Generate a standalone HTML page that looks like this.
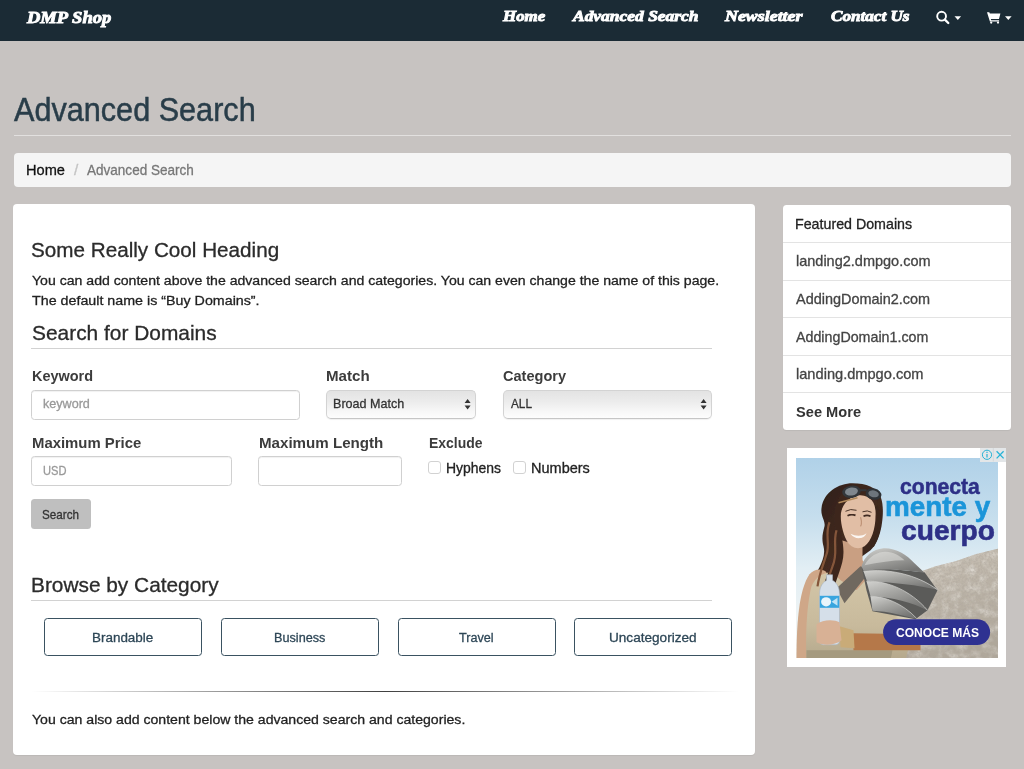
<!DOCTYPE html>
<html lang="en">
<head>
<meta charset="utf-8">
<title>Advanced Search - DMP Shop</title>
<style>
*{box-sizing:border-box;}
html,body{margin:0;padding:0;}
body{width:1024px;height:769px;overflow:hidden;background:#c7c3c1;font-family:"Liberation Sans","DejaVu Sans",sans-serif;color:#222;position:relative;}
.t{position:absolute;display:block;white-space:nowrap;transform-origin:0 0;z-index:5;}
.bx{position:absolute;}
#nav{left:0;top:0;width:1024px;height:40.7px;background:#1b2b35;}
#hr1{left:14px;top:135px;width:997.3px;height:1px;background:#e2e0df;}
#bc{left:13.5px;top:153.2px;width:997.8px;height:33.5px;background:#f5f5f5;border-radius:4px;}
#main{left:13.4px;top:204.1px;width:742px;height:550.9px;background:#fff;border-radius:4px;box-shadow:0 1px 1px rgba(0,0,0,.06);}
.line{left:31px;width:681px;height:1px;background:#d2d2d2;}
.inp{height:29.5px;border:1px solid #d0d0d0;border-radius:3.5px;background:#fff;box-shadow:inset 0 1px 1px rgba(0,0,0,.06);}
.sel{height:29px;border:1px solid #d3d3d3;border-bottom-color:#c6c6c6;border-radius:5px;background:linear-gradient(#e3e3e3 0%,#ececec 40%,#f7f7f7 75%,#fdfdfd 100%);box-shadow:0 1px 1px rgba(0,0,0,.06);}
.cb{width:12.5px;height:12.5px;border:1px solid #d2d2d2;border-radius:3px;background:#fff;}
#btn{left:31px;top:499.25px;width:59.5px;height:29.5px;background:#bfbfbf;border-radius:3.5px;}
.cat{top:618px;width:158px;height:37.7px;border:1px solid #3a5261;border-radius:3.5px;background:#fff;}
#hr2{left:31px;top:691px;width:708px;height:1px;background:linear-gradient(90deg,rgba(0,0,0,0),rgba(0,0,0,.75) 50%,rgba(0,0,0,0));}
#side{left:782.5px;top:204.7px;width:228.5px;height:225.6px;background:#fff;border-radius:3.5px;box-shadow:0 1px 1px rgba(0,0,0,.06);}
.dv{left:782.5px;width:228.5px;height:1px;background:#e3e3e3;}
#ad{left:787px;top:448.2px;width:219px;height:219.2px;background:#fff;}
#brand{left:27.35px;top:5.60px;font:italic bold 16.9px/24px "Liberation Serif","DejaVu Serif",serif;color:#fff;transform:scaleX(1.0963);-webkit-text-stroke:0.9px #fff;}
#n1{left:503.09px;top:5.30px;font:italic bold 15.5px/22px "Liberation Serif","DejaVu Serif",serif;color:#fff;transform:scaleX(1.0912);-webkit-text-stroke:0.9px #fff;}
#n2{left:573.13px;top:5.30px;font:italic bold 15.5px/22px "Liberation Serif","DejaVu Serif",serif;color:#fff;transform:scaleX(1.1262);-webkit-text-stroke:0.9px #fff;}
#n3{left:725.15px;top:5.30px;font:italic bold 15.5px/22px "Liberation Serif","DejaVu Serif",serif;color:#fff;transform:scaleX(1.1538);-webkit-text-stroke:0.9px #fff;}
#n4{left:831.00px;top:5.30px;font:italic bold 15.5px/22px "Liberation Serif","DejaVu Serif",serif;color:#fff;transform:scaleX(1.1053);-webkit-text-stroke:0.9px #fff;}
#h1{left:14.30px;top:86.50px;font:normal normal 33.2px/46px "Liberation Sans","DejaVu Sans",sans-serif;color:#293d49;transform:scaleX(0.9224);-webkit-text-stroke-width:0.5px;}
#b1{left:26.20px;top:160.30px;font:normal normal 14.6px/20px "Liberation Sans","DejaVu Sans",sans-serif;color:#111;transform:scaleX(0.9997);-webkit-text-stroke-width:0.3px;}
#b2{left:73.50px;top:160.30px;font:normal normal 14.6px/20px "Liberation Sans","DejaVu Sans",sans-serif;color:#c4c4c4;transform:scaleX(1.0500);-webkit-text-stroke-width:0.3px;}
#b3{left:86.50px;top:160.30px;font:normal normal 14.6px/20px "Liberation Sans","DejaVu Sans",sans-serif;color:#777;transform:scaleX(0.9271);-webkit-text-stroke-width:0.3px;}
#h2a{left:31.30px;top:236.00px;font:normal normal 20px/28px "Liberation Sans","DejaVu Sans",sans-serif;color:#2b2b2b;transform:scaleX(1.0335);-webkit-text-stroke-width:0.3px;}
#p1{left:31.50px;top:271.00px;font:normal normal 13.7px/19px "Liberation Sans","DejaVu Sans",sans-serif;color:#222;transform:scaleX(1.0291);-webkit-text-stroke-width:0.3px;}
#p2{left:31.50px;top:290.50px;font:normal normal 13.7px/19px "Liberation Sans","DejaVu Sans",sans-serif;color:#222;transform:scaleX(1.0424);-webkit-text-stroke-width:0.3px;}
#h2b{left:31.50px;top:318.50px;font:normal normal 20.3px/28px "Liberation Sans","DejaVu Sans",sans-serif;color:#2b2b2b;transform:scaleX(1.0302);-webkit-text-stroke-width:0.3px;}
#l1{left:31.50px;top:366.00px;font:normal bold 14px/20px "Liberation Sans","DejaVu Sans",sans-serif;color:#3c3c3c;transform:scaleX(1.0329);}
#l2{left:326.25px;top:366.00px;font:normal bold 14px/20px "Liberation Sans","DejaVu Sans",sans-serif;color:#3c3c3c;transform:scaleX(1.0778);}
#l3{left:503.00px;top:366.00px;font:normal bold 14px/20px "Liberation Sans","DejaVu Sans",sans-serif;color:#3c3c3c;transform:scaleX(1.0386);}
#ph1{left:42.75px;top:394.50px;font:normal normal 12.8px/18px "Liberation Sans","DejaVu Sans",sans-serif;color:#999;transform:scaleX(0.9835);-webkit-text-stroke-width:0.3px;}
#s1{left:332.78px;top:395.25px;font:normal normal 13px/18px "Liberation Sans","DejaVu Sans",sans-serif;color:#333;transform:scaleX(0.9659);-webkit-text-stroke-width:0.3px;}
#s2{left:510.50px;top:395.25px;font:normal normal 13px/18px "Liberation Sans","DejaVu Sans",sans-serif;color:#333;transform:scaleX(0.9061);-webkit-text-stroke-width:0.3px;}
#l4{left:31.50px;top:432.50px;font:normal bold 14px/20px "Liberation Sans","DejaVu Sans",sans-serif;color:#3c3c3c;transform:scaleX(1.0639);}
#l5{left:258.75px;top:432.50px;font:normal bold 14px/20px "Liberation Sans","DejaVu Sans",sans-serif;color:#3c3c3c;transform:scaleX(1.0802);}
#l6{left:428.75px;top:432.50px;font:normal bold 14px/20px "Liberation Sans","DejaVu Sans",sans-serif;color:#3c3c3c;transform:scaleX(0.9972);}
#ph2{left:42.75px;top:461.50px;font:normal normal 12.8px/18px "Liberation Sans","DejaVu Sans",sans-serif;color:#999;transform:scaleX(0.8683);-webkit-text-stroke-width:0.3px;}
#c1{left:445.77px;top:458.00px;font:normal normal 14.2px/20px "Liberation Sans","DejaVu Sans",sans-serif;color:#222;transform:scaleX(0.9836);-webkit-text-stroke-width:0.3px;}
#c2{left:530.73px;top:458.00px;font:normal normal 14.2px/20px "Liberation Sans","DejaVu Sans",sans-serif;color:#222;transform:scaleX(1.0229);-webkit-text-stroke-width:0.3px;}
#bt{left:42.25px;top:505.50px;font:normal normal 13px/18px "Liberation Sans","DejaVu Sans",sans-serif;color:#333;transform:scaleX(0.8972);-webkit-text-stroke-width:0.3px;}
#h2c{left:30.97px;top:570.75px;font:normal normal 20.3px/28px "Liberation Sans","DejaVu Sans",sans-serif;color:#2b2b2b;transform:scaleX(1.0276);-webkit-text-stroke-width:0.3px;}
#k1{left:92.22px;top:628.30px;font:normal normal 13.7px/19px "Liberation Sans","DejaVu Sans",sans-serif;color:#2d4656;transform:scaleX(0.9821);-webkit-text-stroke-width:0.3px;}
#k2{left:273.67px;top:628.30px;font:normal normal 13.7px/19px "Liberation Sans","DejaVu Sans",sans-serif;color:#2d4656;transform:scaleX(0.9251);-webkit-text-stroke-width:0.3px;}
#k3{left:459.40px;top:628.30px;font:normal normal 13.7px/19px "Liberation Sans","DejaVu Sans",sans-serif;color:#2d4656;transform:scaleX(0.9232);-webkit-text-stroke-width:0.3px;}
#k4{left:609.41px;top:628.30px;font:normal normal 13.7px/19px "Liberation Sans","DejaVu Sans",sans-serif;color:#2d4656;transform:scaleX(0.9925);-webkit-text-stroke-width:0.3px;}
#p3{left:31.50px;top:710.00px;font:normal normal 13.7px/19px "Liberation Sans","DejaVu Sans",sans-serif;color:#222;transform:scaleX(1.0291);-webkit-text-stroke-width:0.3px;}
#f0{left:795.00px;top:213.50px;font:normal normal 14.2px/20px "Liberation Sans","DejaVu Sans",sans-serif;color:#222;transform:scaleX(1.0033);-webkit-text-stroke-width:0.3px;}
#f1{left:796.30px;top:251.20px;font:normal normal 14.2px/20px "Liberation Sans","DejaVu Sans",sans-serif;color:#444;transform:scaleX(1.0214);-webkit-text-stroke-width:0.3px;}
#f2{left:796.00px;top:288.90px;font:normal normal 14.2px/20px "Liberation Sans","DejaVu Sans",sans-serif;color:#444;transform:scaleX(1.0185);-webkit-text-stroke-width:0.3px;}
#f3{left:796.00px;top:326.80px;font:normal normal 14.2px/20px "Liberation Sans","DejaVu Sans",sans-serif;color:#444;transform:scaleX(1.0047);-webkit-text-stroke-width:0.3px;}
#f4{left:796.30px;top:364.00px;font:normal normal 14.2px/20px "Liberation Sans","DejaVu Sans",sans-serif;color:#444;transform:scaleX(1.0301);-webkit-text-stroke-width:0.3px;}
#f5{left:796.00px;top:401.70px;font:normal bold 14px/20px "Liberation Sans","DejaVu Sans",sans-serif;color:#333;transform:scaleX(1.0454);}
#a1{left:899.60px;top:472.40px;font:normal bold 21.5px/30px "Liberation Sans","DejaVu Sans",sans-serif;color:#2e3087;transform:scaleX(0.9830);-webkit-text-stroke-width:0.5px;}
#a2{left:885.01px;top:487.00px;font:normal bold 28px/39px "Liberation Sans","DejaVu Sans",sans-serif;color:#1b95d9;transform:scaleX(0.9948);-webkit-text-stroke-width:0.6px;}
#a3{left:900.98px;top:510.70px;font:normal bold 27.7px/39px "Liberation Sans","DejaVu Sans",sans-serif;color:#2e3087;transform:scaleX(1.0177);-webkit-text-stroke-width:0.6px;}
#a4{left:895.50px;top:623.80px;font:normal bold 12.5px/18px "Liberation Sans","DejaVu Sans",sans-serif;color:#fff;transform:scaleX(0.9641);}
</style>
</head>
<body>
<div class="bx" id="nav"></div>
<svg class="bx" style="left:930px;top:6px" width="90" height="24" viewBox="930 6 90 24">
  <circle cx="941.6" cy="16.2" r="4.4" fill="none" stroke="#fff" stroke-width="1.9"/>
  <path d="M944.9 19.6 L948.3 23" stroke="#fff" stroke-width="2.3" stroke-linecap="round"/>
  <path d="M954.5 16.3 h6.6 l-3.3 3.6z" fill="#fff"/>
  <path d="M987 12.2h2.3l0.5 1.4h10.6l-1.4 5.4h-8.2l0.4 1.3h7.9v1.2h-9.2z" fill="#fff"/>
  <circle cx="991.2" cy="22.6" r="1.15" fill="#fff"/><circle cx="998" cy="22.6" r="1.15" fill="#fff"/>
  <path d="M1005 16.3 h6.6 l-3.3 3.6z" fill="#fff"/>
</svg>
<div class="bx" id="hr1"></div>
<div class="bx" id="bc"></div>
<div class="bx" id="main"></div>
<div class="bx line" style="top:347.6px"></div>
<div class="bx line" style="top:600px"></div>
<div class="bx inp" style="left:31px;top:390px;width:268.5px"></div>
<div class="bx sel" style="left:325.75px;top:390px;width:150.5px"></div>
<div class="bx sel" style="left:502.5px;top:390px;width:209.25px"></div>
<svg class="bx" style="left:464px;top:398px" width="8" height="13" viewBox="0 0 8 13"><path d="M0.6 5 L3.6 0.9 L6.6 5z M0.6 7.4 L3.6 11.5 L6.6 7.4z" fill="#333"/></svg>
<svg class="bx" style="left:699.6px;top:398px" width="8" height="13" viewBox="0 0 8 13"><path d="M0.6 5 L3.6 0.9 L6.6 5z M0.6 7.4 L3.6 11.5 L6.6 7.4z" fill="#333"/></svg>
<div class="bx inp" style="left:31px;top:456.25px;width:200.5px"></div>
<div class="bx inp" style="left:258px;top:456.25px;width:143.75px"></div>
<div class="bx cb" style="left:428px;top:461.25px"></div>
<div class="bx cb" style="left:513.25px;top:461.25px"></div>
<div class="bx" id="btn"></div>
<div class="bx cat" style="left:43.7px"></div>
<div class="bx cat" style="left:220.8px"></div>
<div class="bx cat" style="left:397.7px"></div>
<div class="bx cat" style="left:574px"></div>
<div class="bx" id="hr2"></div>
<div class="bx" id="side"></div>
<div class="bx dv" style="top:242px"></div>
<div class="bx dv" style="top:279.6px"></div>
<div class="bx dv" style="top:317.3px"></div>
<div class="bx dv" style="top:355px"></div>
<div class="bx dv" style="top:392.4px"></div>
<div class="bx" id="ad"></div>
<svg class="bx" style="left:795.5px;top:457.7px" width="202" height="200.6" viewBox="795.5 457.7 202 200.6">
<defs>
<linearGradient id="sky" x1="0" y1="0" x2="0" y2="1"><stop offset="0" stop-color="#b0d1e8"/><stop offset="0.3" stop-color="#c6deed"/><stop offset="0.55" stop-color="#e2eef4"/><stop offset="0.8" stop-color="#eef3f4"/><stop offset="1" stop-color="#f0f2f0"/></linearGradient>
<linearGradient id="rock" x1="0" y1="0" x2="0.3" y2="1"><stop offset="0" stop-color="#d2cbc0"/><stop offset="0.4" stop-color="#c0b8ac"/><stop offset="1" stop-color="#b0a89b"/></linearGradient>
<linearGradient id="pl" x1="0" y1="0" x2="0.6" y2="1"><stop offset="0" stop-color="#d2d2cf"/><stop offset="0.45" stop-color="#a6a6a3"/><stop offset="1" stop-color="#767674"/></linearGradient>
<linearGradient id="tun" x1="0" y1="0" x2="0" y2="1"><stop offset="0" stop-color="#d3c6a8"/><stop offset="0.6" stop-color="#c8ba9c"/><stop offset="1" stop-color="#b4a88c"/></linearGradient>
<linearGradient id="hair" x1="0" y1="0" x2="1" y2="1"><stop offset="0" stop-color="#2a1c16"/><stop offset="0.5" stop-color="#442b20"/><stop offset="1" stop-color="#2c1d17"/></linearGradient>
<filter id="b1" x="-20%" y="-20%" width="140%" height="140%"><feGaussianBlur stdDeviation="0.7"/></filter>
<filter id="b2" x="-20%" y="-20%" width="140%" height="140%"><feGaussianBlur stdDeviation="1.5"/></filter>
<filter id="grain" x="0" y="0" width="100%" height="100%"><feTurbulence type="fractalNoise" baseFrequency="0.45" numOctaves="3" seed="7" result="n"/><feColorMatrix in="n" type="matrix" values="0 0 0 0 0.42  0 0 0 0 0.38  0 0 0 0 0.33  1.6 1.2 0 0 -1.05" result="d"/><feComposite in="d" in2="SourceGraphic" operator="in"/></filter>
<filter id="grainL" x="0" y="0" width="100%" height="100%"><feTurbulence type="fractalNoise" baseFrequency="0.12" numOctaves="2" seed="3" result="n"/><feColorMatrix in="n" type="matrix" values="0 0 0 0 0.9  0 0 0 0 0.88  0 0 0 0 0.84  0 2.2 0 0 -0.9" result="d"/><feComposite in="d" in2="SourceGraphic" operator="in"/></filter>
<clipPath id="cl"><rect x="795.5" y="457.7" width="202" height="200.6"/></clipPath>
</defs>
<g clip-path="url(#cl)">
<rect x="795.5" y="457.7" width="202" height="200.6" fill="url(#sky)"/>
<!-- rocky hill -->
<path d="M999 548 L987 551 L975 554 L955 561 L935 566 L921 571 L915 600 L905 640 L886 660 L999 660Z" fill="url(#rock)" filter="url(#b1)"/>
<path d="M999 548 L987 551 L975 554 L955 561 L935 566 L921 571 L915 600 L905 640 L886 660 L999 660Z" fill="#fff" filter="url(#grainL)" opacity="0.5"/>
<path d="M999 548 L987 551 L975 554 L955 561 L935 566 L921 571 L915 600 L905 640 L886 660 L999 660Z" fill="#fff" filter="url(#grain)" opacity="0.6"/>
<!-- hair back mass -->
<path d="M852 483 C838 483 823 492 821 508 C820 516 825 520 824 526 C822 534 821 538 823 546 C825 554 822 560 819 567 C815 574 812 580 811 592 L840 594 L848 566 L870 550 C876 544 879 536 881 526 C883 514 883 504 880 496 C876 487 866 483 852 483Z" fill="url(#hair)" filter="url(#b1)"/>
<!-- left arm -->
<path d="M796 660 C796 625 798 590 809 574 C814 568 822 568 826 572 L822 660Z" fill="#cfa788" filter="url(#b1)"/>
<!-- neck / chest -->
<path d="M841 540 L862 546 L862 560 L872 572 L858 590 L836 590 L834 566Z" fill="#c99f82" filter="url(#b1)"/>
<!-- tunic -->
<path d="M810 590 C812 580 820 572 832 572 L840 580 L856 590 L872 572 L905 596 L910 640 L905 660 L806 660 C805 635 806 610 810 590Z" fill="url(#tun)" filter="url(#b1)"/>
<path d="M806 650 L892 650 L890 660 L806 660Z" fill="#a59a7f" filter="url(#b1)"/>
<!-- face -->
<path d="M840 512 C839 500 848 494 860 495 C871 496 876 503 875 516 C875 528 871 541 864 546 C858 550 850 548 846 540 C842 532 840 522 840 512Z" fill="#e1bea5" filter="url(#b1)"/>
<path d="M850 533.5 C855 536 861 536.5 866 533 C864 539 854 540 850 533.5Z" fill="#fbf6f2"/>
<path d="M847 515.5 q4 -2.2 8 -0.4 M863 516 q3.6 -1.8 7 0" stroke="#3f2b22" stroke-width="1.7" fill="none" filter="url(#b1)"/>
<path d="M845 511 q5 -3 11 -1 M862 511.5 q5 -2 9 0.5" stroke="#4a3429" stroke-width="1" fill="none"/>
<path d="M860 517 q2 6 0 9" stroke="#c09478" stroke-width="1.2" fill="none" filter="url(#b1)"/>
<!-- hair front strands -->
<path d="M852 486 C838 492 833 506 834 522 C835 534 838 540 836 550 C834 562 826 572 822 590 L833 592 C835 578 843 566 843 552 C843 540 839 530 840 516 C841 504 848 496 862 494 C868 494 874 497 877 502 L880 496 C874 487 862 483 852 486Z" fill="#3d281e" filter="url(#b1)"/>
<path d="M829 522 C824 534 830 544 826 554 C823 564 819 572 817 586 M836 530 C832 544 838 552 832 566 C829 574 827 580 826 588" stroke="#85573a" stroke-width="2.2" fill="none" filter="url(#b1)"/>
<path d="M876 506 C880 518 880 532 872 546" stroke="#3a261c" stroke-width="3" fill="none" filter="url(#b1)"/>
<!-- goggles -->
<ellipse cx="851" cy="491.5" rx="9.3" ry="6.2" fill="#33373b" transform="rotate(-8 851 491.5)"/><ellipse cx="851" cy="491.2" rx="6.5" ry="4" fill="#7f878e" transform="rotate(-8 851 491.5)"/>
<ellipse cx="873" cy="493.8" rx="8" ry="5.6" fill="#2f3337" transform="rotate(12 873 493.8)"/><ellipse cx="873" cy="493.5" rx="5.3" ry="3.4" fill="#6d757c" transform="rotate(12 873 493.8)"/>
<path d="M859 490 h7" stroke="#33373b" stroke-width="2"/>
<path d="M838 502.5 L857 497.5" stroke="#b08a5c" stroke-width="1.6"/>
<!-- strap -->
<path d="M836 588 L860 566 L868 573 L844 603Z" fill="#6f685f" filter="url(#b1)"/>
<!-- armor plates (bottom to top) -->
<path d="M905 588 L926 592 L922 612 L912 622 L896 618Z" fill="#d8cfb9" filter="url(#b2)"/>
<path d="M861 566 L924 572 L937 590 L927 610 L915 619 L872 611 L866 590Z" fill="#5b5b59"/>
<path d="M870 596 C884 596 902 603 916 618.5 C904 616 888 611 872 610.5Z" fill="url(#pl)"/>
<path d="M866 581 C886 580 910 590 927.5 610.5 C912 602 892 597 870 596Z" fill="url(#pl)"/>
<path d="M863 571 C888 568 916 574 937.5 589.500 C918 585 892 582 866.5 581Z" fill="url(#pl)"/>
<path d="M861 566 C864 556 872 549 883 548 C895 547.5 906 554 914 563 L924 572.500 C904 569 884 568 863 570.500Z" fill="url(#pl)"/>
<path d="M864 565 C869 556 877 551.500 885 551.500 C893 552 899 555 904 560 C892 560 878 562 864 565Z" fill="#e2e2df" opacity="0.55" filter="url(#b1)"/>
<path d="M866 581 C886 580 910 590 927 610 M863 571 C888 568 916 574 937 589.500 M870 596 C884 596 902 603 916 618" stroke="#d4d4d1" stroke-width="0.9" fill="none" opacity="0.8"/>
<!-- belt & wrist -->
<path d="M852 633 L920 634 L920 650 L853 650Z" fill="#b5784a" filter="url(#b1)"/>
<path d="M839 626 L853 630 L854 648 L840 647Z" fill="#c9ab78" filter="url(#b1)"/>
<!-- bottle -->
<path d="M826 574.5 h6 v5.5 c5 3 7 8 7 14 v46 c0 3 -2 4.5 -4 4.5 h-12 c-2 0 -4 -1.500 -4 -4.500 v-46 c0 -6 2 -11 7 -14z" fill="#d5dfe9" stroke="#a9b6c3" stroke-width="0.6" filter="url(#b1)"/>
<path d="M824 584 v54" stroke="#f4f8fb" stroke-width="2.4" opacity="0.8" filter="url(#b1)"/>
<rect x="819.3" y="595.5" width="19.4" height="12" fill="#2aa0dd" opacity="0.92"/>
<ellipse cx="825.6" cy="601.5" rx="5" ry="4.6" fill="#eaf5fb"/>
<path d="M831 601.5 l6 -4 v8z" fill="#bfe3f5"/>
<!-- hand -->
<path d="M816 624 C822 619 834 619 839 622 L841 640 C835 645 823 646 816 642Z" fill="#d8b195" filter="url(#b1)"/>
</g>
<!-- CTA pill -->
<rect x="882.6" y="619" width="107" height="25.7" rx="12.85" fill="#2e3191"/>
</svg>
<div class="bx" style="left:979.5px;top:448.2px;width:26.5px;height:13.5px;background:#e3e6e8"></div>
<svg class="bx" style="left:979.5px;top:448.2px" width="27" height="14" viewBox="0 0 27 14">
<circle cx="7" cy="6.8" r="4.6" fill="none" stroke="#27b3d6" stroke-width="1"/><path d="M7 6v3.600M7 3.800v1.100" stroke="#27b3d6" stroke-width="1.200"/>
<path d="M13.3 0v13.500" stroke="#cfd3d6" stroke-width="0.800"/>
<path d="M16.600 3.200l7 7.200M23.600 3.200l-7 7.200" stroke="#27b3d6" stroke-width="1.300"/>
</svg>

<span class="t" id="brand">DMP Shop</span>
<span class="t" id="n1">Home</span>
<span class="t" id="n2">Advanced Search</span>
<span class="t" id="n3">Newsletter</span>
<span class="t" id="n4">Contact Us</span>
<span class="t" id="h1">Advanced Search</span>
<span class="t" id="b1">Home</span>
<span class="t" id="b2">/</span>
<span class="t" id="b3">Advanced Search</span>
<span class="t" id="h2a">Some Really Cool Heading</span>
<span class="t" id="p1">You can add content above the advanced search and categories. You can even change the name of this page.</span>
<span class="t" id="p2">The default name is “Buy Domains”.</span>
<span class="t" id="h2b">Search for Domains</span>
<span class="t" id="l1">Keyword</span>
<span class="t" id="l2">Match</span>
<span class="t" id="l3">Category</span>
<span class="t" id="ph1">keyword</span>
<span class="t" id="s1">Broad Match</span>
<span class="t" id="s2">ALL</span>
<span class="t" id="l4">Maximum Price</span>
<span class="t" id="l5">Maximum Length</span>
<span class="t" id="l6">Exclude</span>
<span class="t" id="ph2">USD</span>
<span class="t" id="c1">Hyphens</span>
<span class="t" id="c2">Numbers</span>
<span class="t" id="bt">Search</span>
<span class="t" id="h2c">Browse by Category</span>
<span class="t" id="k1">Brandable</span>
<span class="t" id="k2">Business</span>
<span class="t" id="k3">Travel</span>
<span class="t" id="k4">Uncategorized</span>
<span class="t" id="p3">You can also add content below the advanced search and categories.</span>
<span class="t" id="f0">Featured Domains</span>
<span class="t" id="f1">landing2.dmpgo.com</span>
<span class="t" id="f2">AddingDomain2.com</span>
<span class="t" id="f3">AddingDomain1.com</span>
<span class="t" id="f4">landing.dmpgo.com</span>
<span class="t" id="f5">See More</span>
<span class="t" id="a1">conecta</span>
<span class="t" id="a2">mente y</span>
<span class="t" id="a3">cuerpo</span>
<span class="t" id="a4">CONOCE MÁS</span>
</body>
</html>
